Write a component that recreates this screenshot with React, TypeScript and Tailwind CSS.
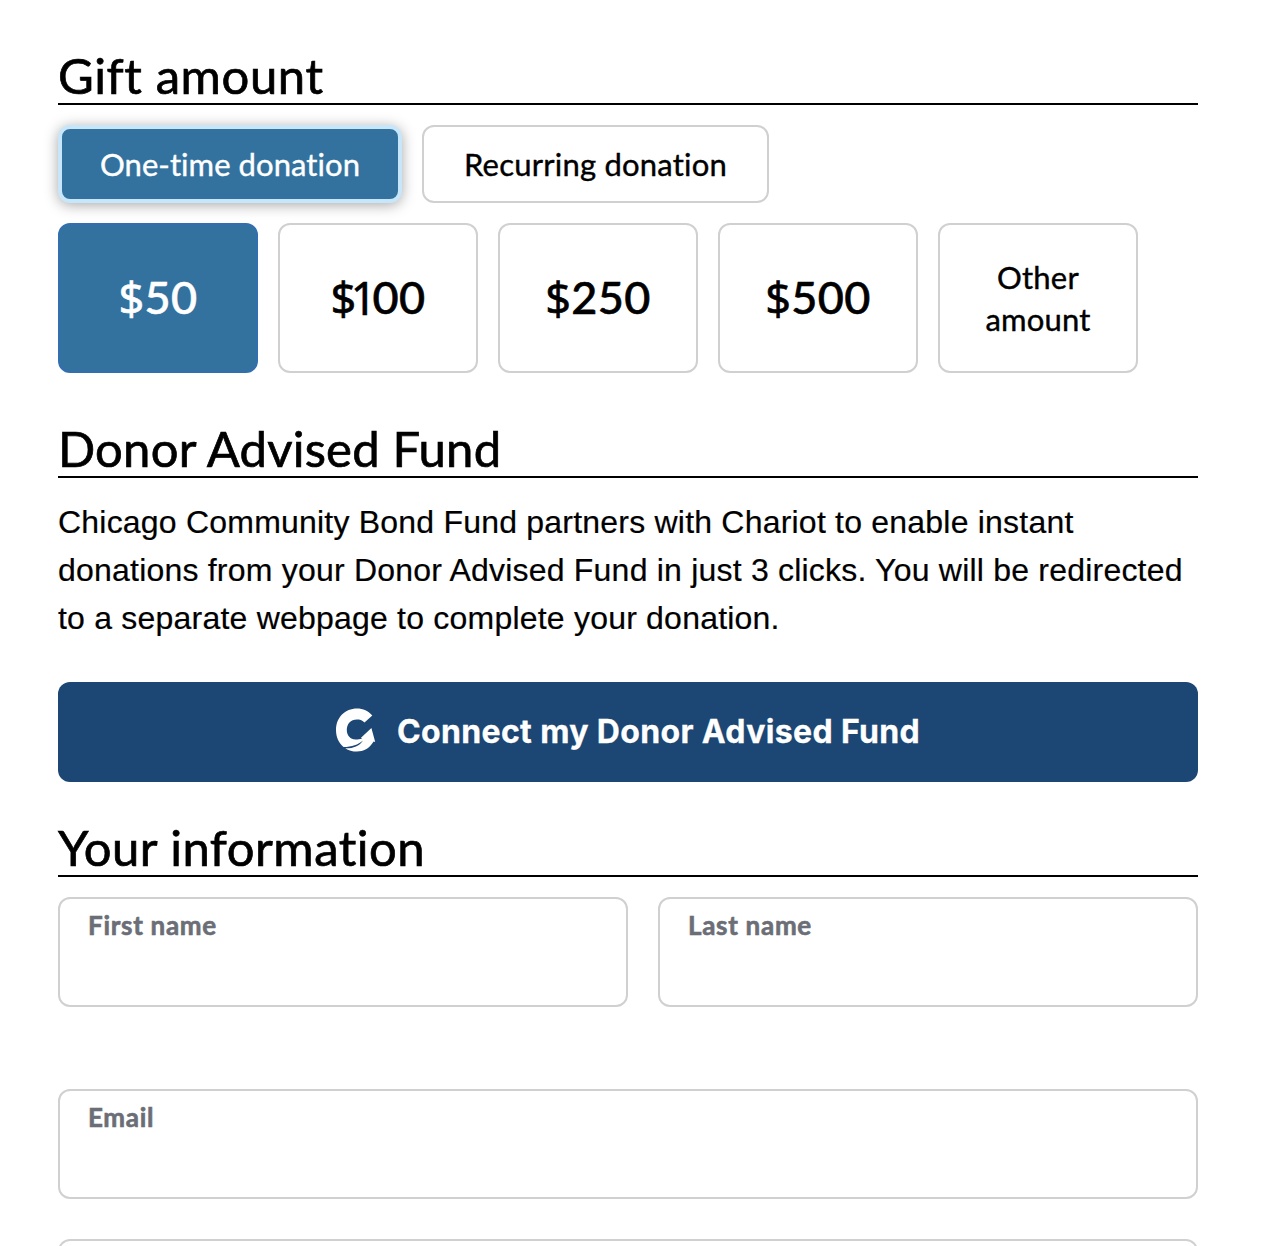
import type { ReactNode } from "react";

const SANS = "font-['Lato','Noto_Sans',sans-serif]";
const STROKE = "[-webkit-text-stroke:0.4px_currentColor]";

function Heading({ children, className }: { children: ReactNode; className: string }) {
  return (
    <h2 className={`h-[57px] border-b-2 border-black text-[49px] leading-[54px] whitespace-nowrap [-webkit-text-stroke:0.7px_currentColor] ${SANS}`}>
      <span className={className}>{children}</span>
    </h2>
  );
}

function Amount({ digits, className }: { digits: string; className: string }) {
  const narrowOne = digits.startsWith("1");
  return (
    <button className={`flex h-[150px] w-[200px] items-center justify-center rounded-[12px] border-2 pb-px font-['Lato',sans-serif] text-[45px] leading-none font-medium tracking-[0.4px] [-webkit-text-stroke:0.6px_currentColor] ${className}`}>
      <span className={`font-['Noto_Sans',sans-serif] font-normal ${narrowOne ? "tracking-[-5.6px]" : ""}`}>$</span>
      {narrowOne && <span className="font-['Noto_Sans',sans-serif] font-normal tracking-[-4px]">1</span>}
      <span>{narrowOne ? digits.slice(1) : digits}</span>
    </button>
  );
}

function Field({ label, className }: { label: string; className: string }) {
  return (
    <label className={`block h-[110px] rounded-[12px] border-2 border-[#d0d0d0] px-7 pt-2 text-[26px] leading-9 font-bold tracking-[0.7px] whitespace-nowrap text-[#6b6e76] [-webkit-text-stroke:0.6px_currentColor] ${SANS} ${className}`}>
      {label}
    </label>
  );
}

function ChariotLogo() {
  return (
    <svg className="relative -top-0.5" width="40" height="44" viewBox="0 0 40 44" fill="#fff" aria-hidden="true">
      <path d="M36.3 7.5 28.5 14.5C26 11.8 23.5 11.4 21 11.4 14.5 11.4 10.8 16 10.8 22 10.8 27.5 14.5 31.4 19.5 31.6 22 31.6 24 31.4 26 30.6L25 29.8 35.4 20 39.2 34 37.6 33.6C33 41 27.5 43.6 21 43.6 16.5 43.6 12.5 42.5 9.2 40.2 17 40.4 23 38.4 27 32.4 22 36.8 16 38.6 7.5 39 2.5 34.8 0 28.8 0 22 0 9.5 9 .5 21 .5 27 .5 32.5 3 36.3 7.5Z" />
    </svg>
  );
}

export default function App() {
  return (
    <main className="h-[1246px] w-[1278px] overflow-hidden bg-white pt-12 pr-20 pl-[58px] text-black">
      <Heading className="tracking-[0.6px]">Gift amount</Heading>
      <div className="mt-5 flex gap-5">
        <button className={`h-[78px] w-[344px] rounded-[12px] border-4 border-[#c8e6fa] bg-[#33729e] text-[31px] leading-none tracking-[0.07px] whitespace-nowrap text-white shadow-[0_2px_14px_rgba(0,0,0,0.35)] ${STROKE} ${SANS}`}>
          One-time donation
        </button>
        <button className={`h-[78px] w-[347px] rounded-[12px] border-2 border-[#d0d0d0] text-[31px] leading-none tracking-[0.22px] whitespace-nowrap ${STROKE} ${SANS}`}>
          Recurring donation
        </button>
      </div>
      <div className="mt-5 flex gap-5">
        <Amount digits="50" className="border-[#336fb0] bg-[#33729e] text-white" />
        <Amount digits="100" className="border-[#d0d0d0]" />
        <Amount digits="250" className="border-[#d0d0d0]" />
        <Amount digits="500" className="border-[#d0d0d0]" />
        <button className={`h-[150px] w-[200px] rounded-[12px] border-2 border-[#d0d0d0] text-[31px] leading-[42px] tracking-[0.2px] ${STROKE} ${SANS}`}>
          Other
          <br />
          amount
        </button>
      </div>
      <div className="mt-12">
        <Heading className="tracking-[0.2px]">Donor Advised Fund</Heading>
      </div>
      <p className="mt-5 font-['Liberation_Sans',Arial,sans-serif] text-[32px] leading-[48px] tracking-[0.21px] whitespace-nowrap [-webkit-text-stroke:0.2px_currentColor]">
        <span className="block">Chicago Community Bond Fund partners with Chariot to enable instant</span>
        <span className="block">donations from your Donor Advised Fund in just 3 clicks. You will be redirected</span>
        <span className="block">to a separate webpage to complete your donation.</span>
      </p>
      <button className="mt-10 flex h-[100px] w-full items-center justify-center gap-[21px] rounded-[12px] bg-[#1c4673] font-['Inter',sans-serif] text-[32px] leading-none font-bold tracking-[0.36px] whitespace-nowrap text-white [-webkit-text-stroke:0.3px_currentColor]">
        <ChariotLogo />
        <span>Connect my Donor Advised Fund</span>
      </button>
      <div className="mt-[38px]">
        <Heading className="tracking-[0.5px]">Your information</Heading>
      </div>
      <div className="mt-5 flex gap-[30px]">
        <Field label="First name" className="w-[570px]" />
        <Field label="Last name" className="w-[540px]" />
      </div>
      <div className="mt-[82px] flex flex-col gap-10">
        <Field label="Email" className="w-full" />
        <Field label="" className="w-full" />
      </div>
    </main>
  );
}
